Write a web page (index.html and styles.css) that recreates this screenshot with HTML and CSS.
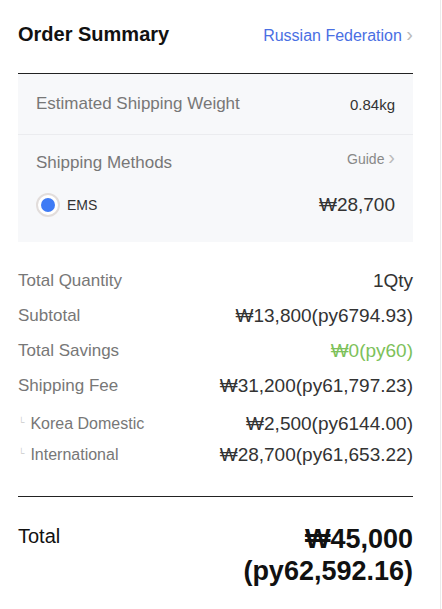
FILE: index.html
```html
<!DOCTYPE html>
<html lang="en">
<head>
    <meta charset="UTF-8">
    <meta name="viewport" content="width=device-width, initial-scale=1.0">
    <title>Order Summary</title>
    <link rel="stylesheet" href="styles.css">
</head>
<body>
    <section class="summary">
        <div class="summary-head">
            <h2>Order Summary</h2>
            <a class="country" href="#">Russian Federation <span class="chevron">&#8250;</span></a>
        </div>

        <div class="shipping-box">
            <div class="weight-row">
                <span class="box-label">Estimated Shipping Weight</span>
                <span class="weight">0.84kg</span>
            </div>
            <div class="methods">
                <div class="methods-head">
                    <span class="box-label">Shipping Methods</span>
                    <a class="guide" href="#">Guide <span class="chevron">&#8250;</span></a>
                </div>
                <label class="method">
                    <span class="radio"><span class="radio-dot"></span></span>
                    <span class="method-name">EMS</span>
                    <span class="method-price">&#8361;28,700</span>
                </label>
            </div>
        </div>

        <ul class="totals">
            <li><span class="label">Total Quantity</span><span class="value">1Qty</span></li>
            <li><span class="label">Subtotal</span><span class="value">&#8361;13,800(py6794.93)</span></li>
            <li><span class="label">Total Savings</span><span class="value savings">&#8361;0(py60)</span></li>
            <li><span class="label">Shipping Fee</span><span class="value">&#8361;31,200(py61,797.23)</span></li>
            <li class="sub"><span class="label"><span class="corner">&#9492;</span>Korea Domestic</span><span class="value">&#8361;2,500(py6144.00)</span></li>
            <li class="sub"><span class="label"><span class="corner">&#9492;</span>International</span><span class="value">&#8361;28,700(py61,653.22)</span></li>
        </ul>

        <div class="grand-total">
            <span class="total-label">Total</span>
            <div class="total-value">
                <span>&#8361;45,000</span>
                <span>(py62,592.16)</span>
            </div>
        </div>
    </section>
</body>
</html>
```

FILE: styles.css
```css
body {
    background-color: #FFFFFF;
    color: #333333;
    font-family: 'Liberation Sans', Arial, sans-serif;
    margin: 0;
    padding: 0;
}

.summary {
    border-right: 1px solid #EBEBEB;
    box-sizing: border-box;
    min-height: 609px;
    padding: 0 27px 0 18px;
    width: 441px;
}

.summary-head {
    align-items: center;
    border-bottom: 1px solid #222222;
    box-sizing: border-box;
    display: flex;
    height: 74px;
    justify-content: space-between;
    padding-bottom: 4px;
}

h2 {
    color: #111111;
    font-size: 20px;
    font-weight: bold;
    margin: 0;
}

a {
    text-decoration: none;
}

.country {
    color: #4A6FE3;
    font-size: 16px;
}

.chevron {
    color: #BBBBBB;
    font-size: 20px;
    line-height: 1;
}

.shipping-box {
    background-color: #F7F8FA;
    padding: 0 18px;
}

.weight-row {
    align-items: center;
    border-bottom: 1px solid #EBECEF;
    display: flex;
    height: 60px;
    justify-content: space-between;
    margin: 0 -18px;
    padding: 0 18px;
}

.box-label {
    color: #777777;
    font-size: 17px;
}

.weight {
    color: #333333;
    font-size: 15px;
}

.methods {
    height: 107px;
}

.methods-head {
    align-items: flex-end;
    display: flex;
    height: 38px;
    justify-content: space-between;
}

.guide {
    color: #888888;
    font-size: 14px;
    padding-bottom: 6px;
}

.method {
    align-items: center;
    display: flex;
    height: 56px;
    margin-top: 4px;
}

.radio {
    align-items: center;
    background-color: #FFFFFF;
    border: 2px solid #E2DDDB;
    border-radius: 50%;
    box-sizing: border-box;
    display: flex;
    height: 24px;
    justify-content: center;
    width: 24px;
}

.radio-dot {
    background-color: #3F7BF5;
    border-radius: 50%;
    height: 14px;
    width: 14px;
}

.method-name {
    color: #333333;
    font-size: 14px;
    margin-left: 7px;
}

.method-price {
    color: #333333;
    font-size: 19px;
    margin-left: auto;
}

.totals {
    list-style: none;
    margin: 0;
    padding: 21px 0 26px;
}

.totals li {
    align-items: center;
    display: flex;
    height: 35px;
    justify-content: space-between;
}

.totals li.sub {
    height: 31px;
}

.totals li:nth-child(5) {
    margin-top: 5px;
}

.label {
    color: #777777;
    font-size: 17px;
}

.sub .label {
    font-size: 16px;
}

.corner {
    color: #CCCCCC;
    display: inline-block;
    font-size: 9px;
    margin-right: 6px;
    vertical-align: 4px;
}

.value {
    color: #333333;
    font-size: 19px;
}

.savings {
    color: #7DC15A;
}

.grand-total {
    border-top: 1px solid #222222;
    display: flex;
    justify-content: space-between;
    padding-top: 26px;
}

.total-label {
    color: #111111;
    font-size: 20px;
    padding-top: 2px;
}

.total-value {
    align-items: flex-end;
    color: #111111;
    display: flex;
    flex-direction: column;
    font-size: 27px;
    font-weight: bold;
    line-height: 32px;
}
```
